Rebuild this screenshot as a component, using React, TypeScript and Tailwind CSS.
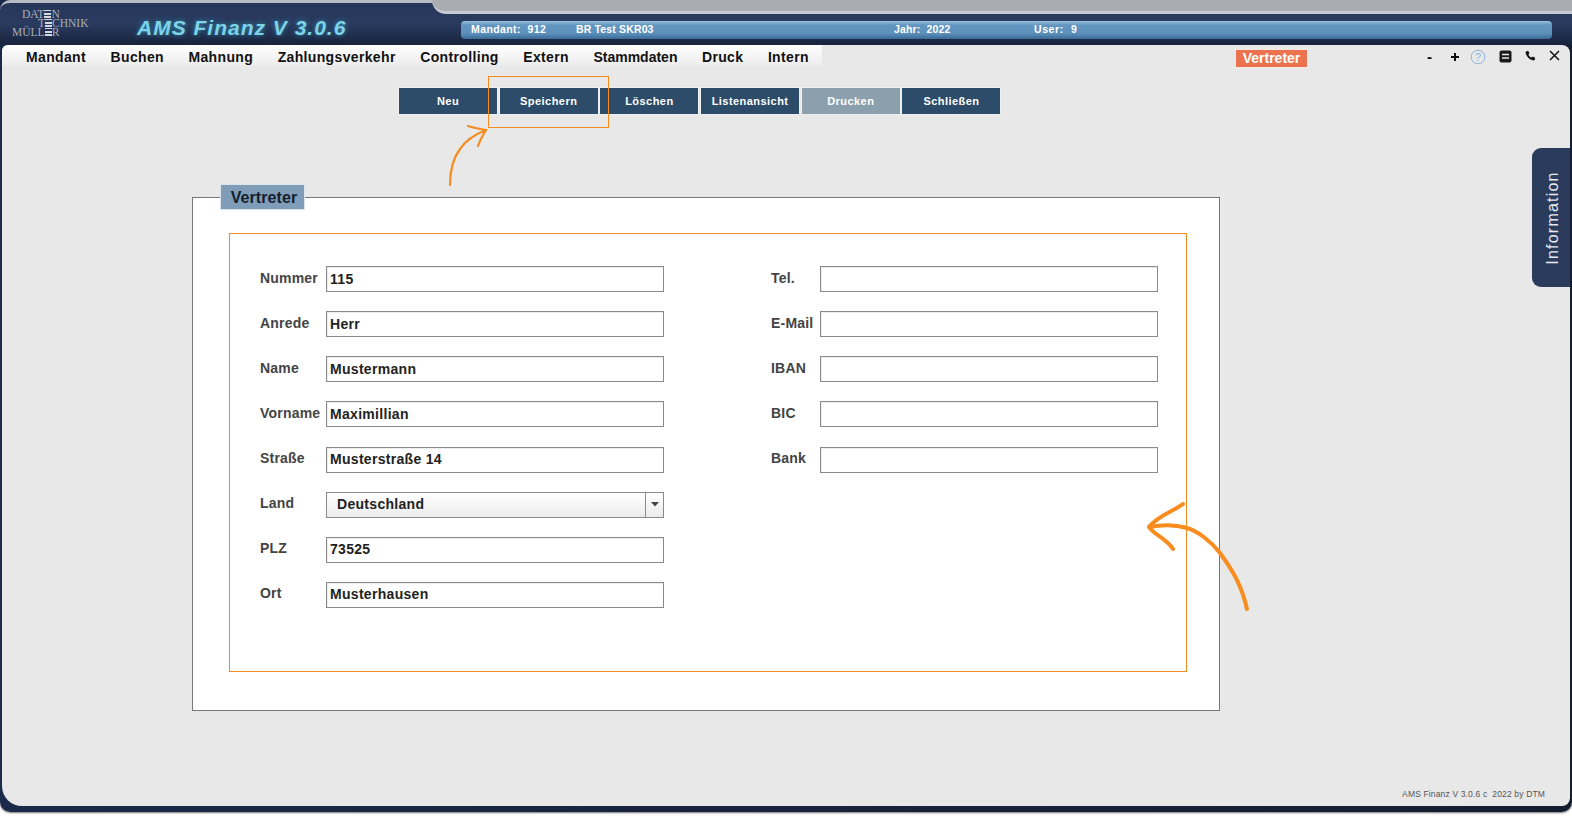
import React from "react";

const sans = "font-['Liberation_Sans',Arial,sans-serif]";

const menu = ["Mandant", "Buchen", "Mahnung", "Zahlungsverkehr", "Controlling", "Extern", "Stammdaten", "Druck", "Intern"];
const buttons = ["Neu", "Speichern", "Löschen", "Listenansicht", "Drucken", "Schließen"];

function Bars() {
  return (
    <span className="inline-block h-[9px] bg-[repeating-linear-gradient(to_bottom,#d5d8de_0,#d5d8de_1.5px,transparent_1.5px,transparent_3.2px)] text-transparent">E</span>
  );
}

function Field({ label, value, labelW = "w-[66px]" }: { label: string; value?: string; labelW?: string }) {
  return (
    <div className="flex h-[26px] items-center">
      <span className={`${labelW} -mt-[2px] whitespace-nowrap text-[14px] font-bold tracking-[0.2px] text-[#444]`}>{label}</span>
      <div className="flex h-[26px] w-[338px] items-center border border-[#8a8a8a] bg-white pl-[3px] text-[14px] font-bold tracking-[0.3px] text-[#222] shadow-[inset_1px_1px_0_#eeeeee]">
        {value}
      </div>
    </div>
  );
}

function Select({ label, value }: { label: string; value: string }) {
  return (
    <div className="flex h-[26px] items-center">
      <span className="-mt-[2px] w-[66px] text-[14px] font-bold tracking-[0.2px] text-[#444]">{label}</span>
      <div className="flex h-[26px] w-[338px] items-center border border-[#8a8a8a] bg-gradient-to-b from-white to-[#ececec] text-[14px] font-bold tracking-[0.3px] text-[#222]">
        <span className="flex-1 pl-[10px]">{value}</span>
        <span className="flex h-full w-[18px] items-center justify-center border-l border-[#8a8a8a]">
          <svg width="8" height="5" viewBox="0 0 8 5"><path d="M0 0h8L4 4.500z" fill="#444" /></svg>
        </span>
      </div>
    </div>
  );
}

export default function App() {
  return (
    <div className={`h-[825px] w-[1572px] overflow-hidden bg-white ${sans}`}>
      <div className="relative flex h-[812px] flex-col rounded-b-[10px] bg-gradient-to-r from-[#1b2a4a] to-[#151d30] pb-[6px] pl-[2px] pr-[2px] shadow-[0_1px_2px_#777777]">
        {/* header */}
        <header className="relative -ml-[2px] -mr-[2px] flex h-[45px] shrink-0 items-center rounded-t-[10px] border-t-[3px] border-[#b9bcc4] bg-gradient-to-b from-[#27375a] via-[#2a3b60] to-[#18233c]">
          <div className="absolute -top-[3px] right-0 h-[14px] w-[1140px] rounded-bl-[24px] border-b-[3px] border-[#c8cad4] bg-[#a9acb0]" />
          <div className="ml-[12px] -mt-[1px] flex h-[27px] w-[80px] shrink-0 flex-col font-['Liberation_Serif',serif] text-[11.5px] leading-[9px] text-[#a9adb6]">
            <div className="ml-[10px] h-[9px] whitespace-nowrap">DAT<Bars />N</div>
            <div className="ml-[26px] h-[9px] whitespace-nowrap">T<Bars />CHNIK</div>
            <div className="h-[9px] whitespace-nowrap">MÜLL<Bars />R</div>
          </div>
          <div className="ml-[45px] mt-[7px] w-[209px] shrink-0 whitespace-nowrap text-[21px] font-bold italic leading-none tracking-[1px] text-[#7ed3e6] [text-shadow:0_0_5px_#2f8fb0]">
            AMS Finanz V 3.0.6
          </div>
          <div className="relative ml-[115px] mt-[11px] flex h-[18px] w-[1091px] shrink-0 items-center rounded-[4px] bg-[linear-gradient(to_bottom,#9cc0dc_0,#6396c0_22%,#5c8fba_70%,#3a6a98_100%)] text-[10.5px] font-bold tracking-[0.15px] text-white">
            <span className="ml-[10px] w-[105px] whitespace-pre tracking-[0.4px]">Mandant:  912</span>
            <span className="w-[318px]">BR Test SKR03</span>
            <span className="w-[140px] whitespace-pre">Jahr:  2022</span>
            <span className="whitespace-pre tracking-[0.6px]">User:  9</span>
          </div>
        </header>

        {/* content */}
        <main className="relative flex flex-1 flex-col rounded-bl-[20px] rounded-br-[8px] rounded-tl-[6px] rounded-tr-[8px] bg-[#e8e8e8]">
          {/* menu row */}
          <div className="flex h-[21px] items-center">
            <nav className="flex h-full w-[820px] items-center gap-[24.500px] rounded-tl-[6px] bg-gradient-to-b from-white to-[#ececec] pl-[24px] pt-[4px] text-[14px] font-bold tracking-[0.35px] text-[#111]">
              {menu.map((m) => (
                <span key={m} className={m === "Stammdaten" ? "tracking-[0px]" : ""}>{m}</span>
              ))}
            </nav>
            <span className="ml-[413px] mt-[6px] flex h-[19px] w-[73px] items-center justify-center border border-[#f8e8e0] bg-[#ec7350] text-[14px] font-bold text-white">
              Vertreter
            </span>
            <div className="flex h-full flex-1 items-center pt-[2px] text-black">
              <span className="ml-[119px] w-[5px] text-[15px] font-bold leading-none">-</span>
              <svg className="ml-[18px]" width="10" height="10" viewBox="0 0 10 10"><path d="M5 1v8M1 5h8" stroke="#111" strokeWidth="2" /></svg>
              <svg className="ml-[10px]" width="16" height="16" viewBox="0 0 16 16" fill="none" stroke="#8fb4da"><circle cx="8" cy="8" r="6.800" /><text x="8" y="12" fontSize="11" textAnchor="middle" fill="#8fb4da" stroke="none">?</text></svg>
              <svg className="ml-[13px]" width="13" height="13" viewBox="0 0 13 13"><rect x="0.5" y="0.5" width="12" height="12" rx="2" fill="#1a1a1a" /><path d="M3 4.500h7M3 8h7" stroke="#e8e8e8" strokeWidth="1.400" /></svg>
              <svg className="ml-[13px] -mt-[2px]" width="11" height="11" viewBox="0 0 24 24"><path d="M6.600 1.500 10 7l-2.600 2.600c1.400 3 4 5.600 7 7L17 14l5.500 3.400-1.500 4c-.4 1-1.300 1.600-2.400 1.400C9.800 21.300 2.700 14.200 1.200 5.400 1 4.300 1.600 3.400 2.600 3z" fill="#111" /></svg>
              <svg className="ml-[13px] -mt-[2px]" width="11" height="11" viewBox="0 0 11 11"><path d="M1 1l9 9M10 1l-9 9" stroke="#111" strokeWidth="1.500" /></svg>
            </div>
          </div>

          {/* toolbar */}
          <div className="mt-[21px] flex gap-[0.7px] pl-[396px]">
            {buttons.map((b) => (
              <button
                key={b}
                className={`h-[28px] w-[100px] border border-[#eef0f2] text-[11px] font-bold tracking-[0.45px] text-white ${b === "Drucken" ? "bg-[#8c9fad]" : "bg-[#2c4c6a]"}`}
              >
                {b}
              </button>
            ))}
          </div>

          {/* fieldset */}
          <section className="relative ml-[190px] mt-[82px] h-[514px] w-[1028px] border border-[#777] bg-white px-[36px] pt-[35px]">
            <div className="absolute -top-[14px] left-[27px] flex h-[26px] w-[85px] items-center justify-center border border-[#dde4ea] bg-[#7f9db9] pl-[3px] pt-[1px] text-[16px] font-bold tracking-[0.1px] text-[#14202c]">
              Vertreter
            </div>
            <div className="grid h-[439px] w-[957.500px] grid-cols-[404px_1fr] gap-x-[107px] border border-[#f08a24] pl-[30px] pt-[32px]">
              <div className="flex flex-col gap-[19.150px]">
                <Field label="Nummer" value="115" />
                <Field label="Anrede" value="Herr" />
                <Field label="Name" value="Mustermann" />
                <Field label="Vorname" value="Maximillian" />
                <Field label="Straße" value="Musterstraße 14" />
                <Select label="Land" value="Deutschland" />
                <Field label="PLZ" value="73525" />
                <Field label="Ort" value="Musterhausen" />
              </div>
              <div className="flex flex-col gap-[19.150px]">
                <Field labelW="w-[49px]" label="Tel." />
                <Field labelW="w-[49px]" label="E-Mail" />
                <Field labelW="w-[49px]" label="IBAN" />
                <Field labelW="w-[49px]" label="BIC" />
                <Field labelW="w-[49px]" label="Bank" />
              </div>
            </div>
          </section>

          {/* footer */}
          <div className="absolute bottom-[5px] right-[25px] whitespace-pre text-[8.500px] tracking-[0.15px] text-[#555]">AMS Finanz V 3.0.6 c  2022 by DTM</div>

          {/* information tab */}
          <div className="absolute right-0 top-[103px] flex h-[139px] w-[38px] items-center justify-center rounded-l-[9px] bg-[#2a3b5c] pl-[3px]">
            <span className="-rotate-90 whitespace-nowrap text-[16px] tracking-[1.200px] text-[#e6e9ee]">Information</span>
          </div>

          {/* annotations */}
          <div className="pointer-events-none absolute left-[486px] top-[31px] h-[52px] w-[121px] border border-[#f58a1f]" />
          <svg className="pointer-events-none absolute left-[440px] top-[78px]" width="50" height="66" viewBox="0 0 50 66" fill="none" stroke="#f68b1f" strokeLinecap="round" strokeLinejoin="round" strokeWidth="2.200">
            <path d="M8 62C8 45 12 34 18 26 24 17 34 11 44 7" />
            <path d="M26 3c6 2 12 3 18 4-3 5-6 10-8 16" />
          </svg>
          <svg className="pointer-events-none absolute left-[1140px] top-[457px]" width="110" height="112" viewBox="0 0 110 112" fill="none" stroke="#f98c1d" strokeLinecap="round" strokeLinejoin="round" strokeWidth="4">
            <path d="M105 107C100 85 92 70 78 51 68 38 55 29 45 26 32 22 18 23 7 25" />
            <path d="M41 2C30 10 15 14 7 25 12 33 24 36 31 47" />
          </svg>
        </main>
      </div>
    </div>
  );
}
